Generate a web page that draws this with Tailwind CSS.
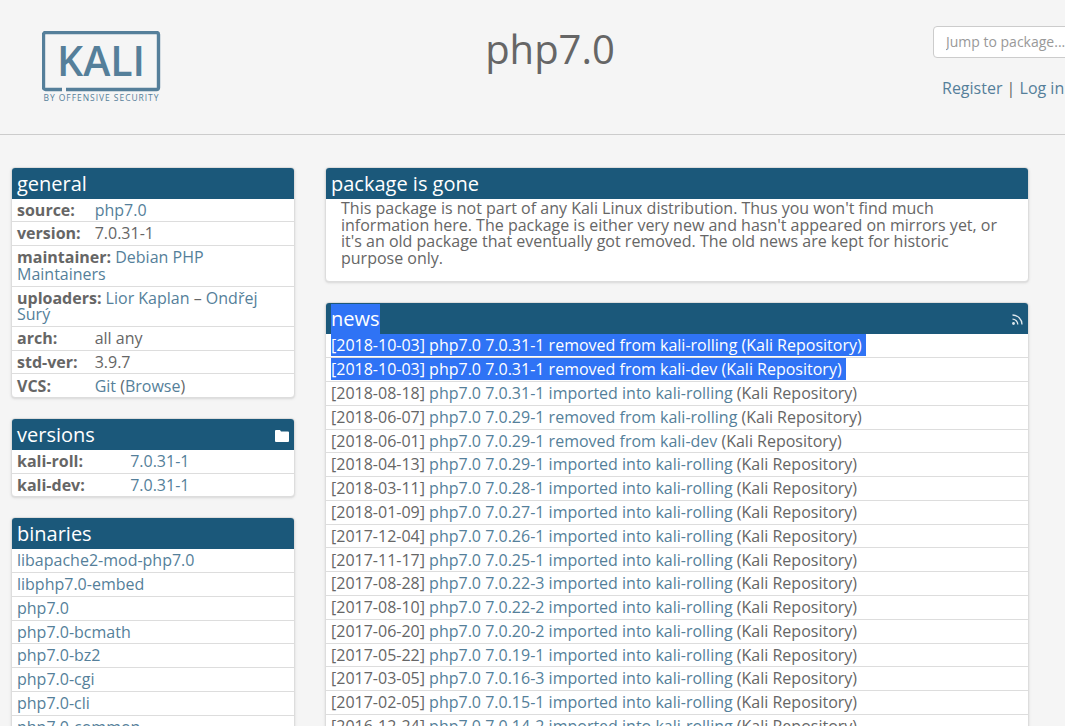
<!DOCTYPE html>
<html lang="en">
<head>
    <meta charset="UTF-8">
    <meta name="viewport" content="width=device-width, initial-scale=1.0">
    <title>php7.0</title>
    <script src="https://cdn.jsdelivr.net/npm/@tailwindcss/browser@4"></script>
</head>
<body class="h-screen overflow-hidden bg-[#f5f5f5] text-[#666666] text-[16px] font-['Open_Sans',sans-serif]">
    <header class="flex h-[135px] border-b border-[#cccccc]">
        <div class="w-[167px] shrink-0 pl-[42px] pt-[31px]">
            <svg width="120" height="71" viewBox="0 0 120 71" class="block">
                <path d="M20 58.500H3.500a2 2 0 0 1-2-2V3.500a2 2 0 0 1 2-2h111a2 2 0 0 1 2 2v53a2 2 0 0 1-2 2H24" fill="none" stroke="#557f9a" stroke-width="3.400"/>
                <text x="15" y="45" font-family="Open Sans" font-size="41" font-weight="600" fill="#557f9a">KALI</text>
                <text x="1.500" y="69.500" font-family="Open Sans" font-size="8.500" font-weight="500" letter-spacing="0.950" fill="#557f9a">BY OFFENSIVE SECURITY</text>
            </svg>
        </div>
        <h1 class="flex-1 text-center text-[40px] leading-[54px] pt-[22px] text-[#666666]">php7.0</h1>
        <div class="w-[132px] shrink-0 pt-[26px]">
            <input class="block w-[190px] h-[32px] px-3 pb-[1px] bg-white border border-[#cccccc] rounded-[4px] text-[14px] placeholder:text-[#999999]" placeholder="Jump to package...">
            <p class="mt-[19px] ml-[9px] whitespace-nowrap leading-[22.857px]"><a class="text-[#557f9a]">Register</a> | <a class="text-[#557f9a]">Log in</a></p>
        </div>
    </header>

    <main class="flex gap-[30px] pl-[11px] pt-[32px]">
        <div class="w-[284px] shrink-0 flex flex-col gap-[20px]">
            <section class="bg-white border border-[#dddddd] rounded-[4px] shadow-sm">
                <h2 class="bg-[#1b587a] text-white text-[20px] pt-[1px] leading-[29.6px] px-[5px] rounded-t-[3px]">general</h2>
                <div class="px-[5px] py-[3.1px] leading-[16.6px] border-b border-[#dddddd]"><b class="inline-block min-w-[73.5px]">source:</b> <a class="text-[#557f9a]">php7.0</a></div>
                <div class="px-[5px] py-[3.1px] leading-[16.6px] border-b border-[#dddddd]"><b class="inline-block min-w-[73.5px]">version:</b> 7.0.31-1</div>
                <div class="px-[5px] py-[3.1px] leading-[16.6px] border-b border-[#dddddd]"><b>maintainer:</b> <a class="text-[#557f9a]">Debian PHP Maintainers</a></div>
                <div class="px-[5px] py-[3.1px] leading-[16.6px] border-b border-[#dddddd]"><b>uploaders:</b> <a class="text-[#557f9a]">Lior Kaplan</a> – <a class="text-[#557f9a]">Ondřej Surý</a></div>
                <div class="px-[5px] py-[3.1px] leading-[16.6px] border-b border-[#dddddd]"><b class="inline-block min-w-[73.5px]">arch:</b> all any</div>
                <div class="px-[5px] py-[3.1px] leading-[16.6px] border-b border-[#dddddd]"><b class="inline-block min-w-[73.5px]">std-ver:</b> 3.9.7</div>
                <div class="px-[5px] py-[3.1px] leading-[16.6px]"><b class="inline-block min-w-[73.5px]">VCS:</b> <a class="text-[#557f9a]">Git</a> (<a class="text-[#557f9a]">Browse</a>)</div>
            </section>

            <section class="bg-white border border-[#dddddd] rounded-[4px] shadow-sm">
                <h2 class="flex justify-between bg-[#1b587a] text-white text-[20px] pt-[1px] leading-[29.6px] px-[5px] rounded-t-[3px]">versions
                    <svg width="14" height="12" viewBox="0 0 14 12" class="mt-[10px]"><path d="M0 1a1 1 0 0 1 1-1h4l1 1.500h7a1 1 0 0 1 1 1V11a1 1 0 0 1-1 1H1a1 1 0 0 1-1-1z" fill="#ffffff"/></svg>
                </h2>
                <div class="px-[5px] py-[3.1px] leading-[16.6px] border-b border-[#dddddd]"><b class="inline-block min-w-[109px]">kali-roll:</b> <a class="text-[#557f9a]">7.0.31-1</a></div>
                <div class="px-[5px] py-[3.1px] leading-[16.6px]"><b class="inline-block min-w-[109px]">kali-dev:</b> <a class="text-[#557f9a]">7.0.31-1</a></div>
            </section>

            <section class="bg-white border border-[#dddddd] rounded-[4px] shadow-sm">
                <h2 class="bg-[#1b587a] text-white text-[20px] pt-[1px] leading-[29.8px] px-[5px] rounded-t-[3px]">binaries</h2>
                <div id="binaries"></div>
            </section>
        </div>

        <div class="w-[704px] shrink-0 flex flex-col gap-[20px]">
            <section class="bg-white border border-[#dddddd] rounded-[4px] shadow-sm">
                <h2 class="bg-[#1b587a] text-white text-[20px] pt-[1px] leading-[30px] px-[5px] rounded-t-[3px]">package is gone</h2>
                <p class="pl-[15px] pr-[20px] pt-[1px] pb-[15px] leading-[16.6px]">This package is not part of any Kali Linux distribution. Thus you won't find much information here. The package is either very new and hasn't appeared on mirrors yet, or it's an old package that eventually got removed. The old news are kept for historic purpose only.</p>
            </section>

            <section class="bg-white border border-[#dddddd] rounded-[4px] shadow-sm">
                <h2 class="flex justify-between bg-[#1b587a] text-white text-[20px] pt-[1px] leading-[30px] px-[5px] rounded-t-[3px]"><span class="bg-[#2f73f5]">news</span>
                    <svg width="11" height="11" viewBox="0 0 11 11" class="mt-[10px]" fill="none" stroke="#dfe8ee" stroke-width="1.300"><circle cx="1.500" cy="9.500" r="1.400" fill="#dfe8ee" stroke="none"/><path d="M0.500 5.200a5.300 5.300 0 0 1 5.300 5.300"/><path d="M0.500 1a9.500 9.500 0 0 1 9.500 9.500"/></svg>
                </h2>
                <div class="px-[5px] py-[3.1px] leading-[16.6px] border-b border-[#dddddd]"><span class="bg-[#2f73f5] text-white pr-[4.5px]">[2018-10-03] php7.0 7.0.31-1 removed from kali-rolling (Kali Repository)</span></div>
                <div class="px-[5px] py-[3.1px] leading-[16.6px] border-b border-[#dddddd]"><span class="bg-[#2f73f5] text-white pr-[4.5px]">[2018-10-03] php7.0 7.0.31-1 removed from kali-dev (Kali Repository)</span></div>
                <div id="news"></div>
            </section>
        </div>
    </main>

    <script>
        const binaries = ["libapache2-mod-php7.0", "libphp7.0-embed", "php7.0", "php7.0-bcmath", "php7.0-bz2", "php7.0-cgi", "php7.0-cli", "php7.0-common"];
        const news = [
            ["2018-08-18", "7.0.31-1 imported into kali-rolling"],
            ["2018-06-07", "7.0.29-1 removed from kali-rolling"],
            ["2018-06-01", "7.0.29-1 removed from kali-dev"],
            ["2018-04-13", "7.0.29-1 imported into kali-rolling"],
            ["2018-03-11", "7.0.28-1 imported into kali-rolling"],
            ["2018-01-09", "7.0.27-1 imported into kali-rolling"],
            ["2017-12-04", "7.0.26-1 imported into kali-rolling"],
            ["2017-11-17", "7.0.25-1 imported into kali-rolling"],
            ["2017-08-28", "7.0.22-3 imported into kali-rolling"],
            ["2017-08-10", "7.0.22-2 imported into kali-rolling"],
            ["2017-06-20", "7.0.20-2 imported into kali-rolling"],
            ["2017-05-22", "7.0.19-1 imported into kali-rolling"],
            ["2017-03-05", "7.0.16-3 imported into kali-rolling"],
            ["2017-02-05", "7.0.15-1 imported into kali-rolling"],
            ["2016-12-24", "7.0.14-2 imported into kali-rolling"]
        ];

        document.getElementById("binaries").innerHTML = binaries.map(name =>
            `<div class="px-[5px] py-[3.1px] leading-[16.6px] border-b border-[#dddddd]"><a class="text-[#557f9a]">${name}</a></div>`
        ).join("");

        document.getElementById("news").innerHTML = news.map(([date, text]) =>
            `<div class="px-[5px] py-[3.1px] leading-[16.6px] border-b border-[#dddddd]">[${date}] <a class="text-[#557f9a]">php7.0 ${text}</a> (Kali Repository)</div>`
        ).join("");
    </script>
</body>
</html>
